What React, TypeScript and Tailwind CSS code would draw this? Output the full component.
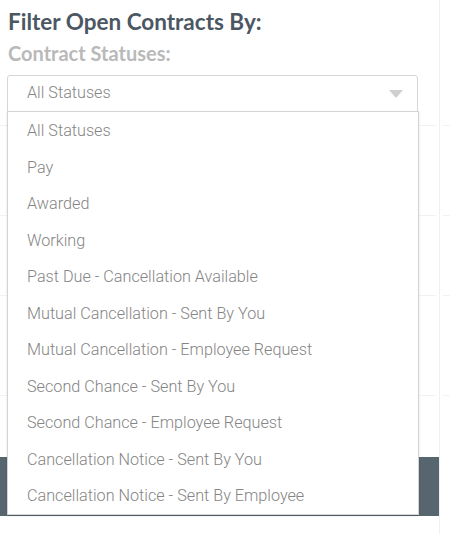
const statuses = [
  'All Statuses',
  'Pay',
  'Awarded',
  'Working',
  'Past Due - Cancellation Available',
  'Mutual Cancellation - Sent By You',
  'Mutual Cancellation - Employee Request',
  'Second Chance - Sent By You',
  'Second Chance - Employee Request',
  'Cancellation Notice - Sent By You',
  'Cancellation Notice - Sent By Employee',
]

const App = () => {
  return (
    <div className="relative w-[450px] h-[534px] overflow-hidden bg-white flex">
      {/* page behind the open menu */}
      <div className="w-[440px] h-full border-r border-[#f0f0f0] flex flex-col">
        <div className="h-[125px] px-2 pt-[8px]">
          <h1 className="font-['Lato',sans-serif] font-bold text-[22.5px] leading-[28px] text-[#4b5763]">
            Filter Open Contracts By:
          </h1>
          <h2 className="mt-[4px] font-['Lato',sans-serif] font-bold text-[20px] leading-[26px] text-[#b9b9b9]">
            Contract Statuses:
          </h2>
          <div className="mt-[9px] -ml-px w-[411px] h-[37px] border border-[#d6d6d6] rounded-t-[3px] flex items-center justify-between pl-[19px] pr-[14px]">
            <span className="font-['Roboto',sans-serif] font-light text-[16.2px] text-[#858585]">
              All Statuses
            </span>
            <svg width="14" height="8" viewBox="0 0 14 8">
              <path d="M0 0h14L7 8z" fill="#cfcfcf" />
            </svg>
          </div>
        </div>
        <div className="h-[90px] border-t border-[#f2f2f2] mr-[3px]" />
        <div className="h-[80px] border-t border-[#f2f2f2] mr-[3px]" />
        <div className="h-[100px] border-t border-[#f2f2f2] mr-[3px]" />
        <div className="h-[62px] border-t border-[#f2f2f2] mr-[3px]" />
        <div className="h-[59px] bg-[#56656e]" />
      </div>
      <div className="flex-1 flex flex-col">
        <div className="h-[125px]" />
        <div className="h-[90px] border-t border-[#f2f2f2] ml-[3px]" />
        <div className="h-[80px] border-t border-[#f2f2f2] ml-[3px]" />
        <div className="h-[100px] border-t border-[#f2f2f2] ml-[3px]" />
        <div className="border-t border-[#f2f2f2] ml-[3px]" />
      </div>

      {/* open dropdown */}
      <ul className="absolute left-[7px] top-[111px] w-[412px] h-[404px] bg-white border border-[#d4d4d4] shadow-[0_1px_2px_rgba(0,0,0,0.12)] pt-[1px]">
        {statuses.map((s, idx) => (
          <li
            key={idx}
            className="h-[36.5px] flex items-center pl-[19px] font-['Roboto',sans-serif] font-light text-[16.2px] text-[#858585]"
          >
            {s}
          </li>
        ))}
      </ul>
    </div>
  )
}

export default App
